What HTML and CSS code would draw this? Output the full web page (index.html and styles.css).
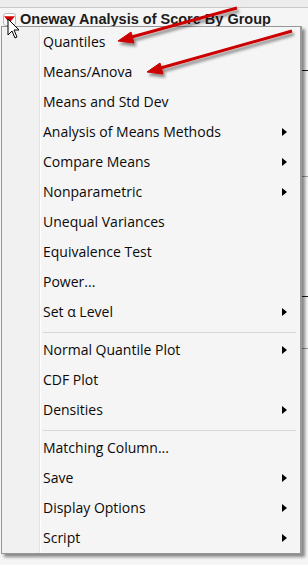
FILE: index.html
```html
<!DOCTYPE html>
<html lang="en">
<head>
    <meta charset="UTF-8">
    <title>Oneway Analysis menu</title>
    <link rel="stylesheet" href="styles.css">
</head>
<body>
    <div class="window">
        <div class="top-strip"></div>
        <div class="title-bar">
            <span class="disclosure">
                <svg width="12" height="8" viewBox="0 0 12 8"><polygon points="0,0 12,0 6,7" fill="#d40000"/></svg>
            </span>
            <span class="title">Oneway Analysis of Score By Group</span>
        </div>
        <!-- report content behind the menu -->
        <div class="report">
            <div class="rule dark" style="top: 42px"></div>
            <div class="rule" style="top: 148px"></div>
            <div class="rule dark" style="top: 268px"></div>
            <div class="rule" style="top: 320px"></div>
        </div>
    </div>

    <div class="menu">
        <div class="menu-item">Quantiles</div>
        <div class="menu-item">Means/Anova</div>
        <div class="menu-item">Means and Std Dev</div>
        <div class="menu-item sub">Analysis of Means Methods</div>
        <div class="menu-item sub">Compare Means</div>
        <div class="menu-item sub">Nonparametric</div>
        <div class="menu-item">Unequal Variances</div>
        <div class="menu-item">Equivalence Test</div>
        <div class="menu-item">Power...</div>
        <div class="menu-item sub">Set α Level</div>
        <div class="menu-sep"></div>
        <div class="menu-item sub">Normal Quantile Plot</div>
        <div class="menu-item">CDF Plot</div>
        <div class="menu-item sub">Densities</div>
        <div class="menu-sep"></div>
        <div class="menu-item">Matching Column...</div>
        <div class="menu-item sub">Save</div>
        <div class="menu-item sub">Display Options</div>
        <div class="menu-item sub">Script</div>
    </div>

    <!-- mouse pointer -->
    <svg class="cursor" width="14" height="22" viewBox="0 0 14 22">
        <path d="M1 1 L1 17 L5 13 L8 20 L10 19 L7 12 L12 12 Z" fill="#fff" stroke="#000" stroke-width="1" stroke-linejoin="miter"/>
    </svg>

    <!-- callout arrows -->
    <svg class="callouts" width="308" height="100" viewBox="0 0 308 100">
        <defs>
            <filter id="shadow" x="-20%" y="-50%" width="140%" height="200%">
                <feDropShadow dx="2" dy="3" stdDeviation="1.6" flood-color="#000" flood-opacity="0.45"/>
            </filter>
        </defs>
        <g filter="url(#shadow)" fill="#cc0000" stroke="#cc0000">
            <line x1="237" y1="8" x2="128" y2="38" stroke-width="3"/>
            <polygon points="118,41 131,32 134,43" stroke-width="1"/>
            <line x1="292" y1="31" x2="157" y2="69" stroke-width="3"/>
            <polygon points="147,72 160,63 163,74" stroke-width="1"/>
        </g>
    </svg>
</body>
</html>
```

FILE: styles.css
```css
body {
    margin: 0;
    width: 308px;
    height: 565px;
    background-color: #ffffff;
    font-family: "Open Sans", "Noto Sans", sans-serif;
    position: relative;
    overflow: hidden;
}
.window {
    height: 100%;
    background-color: #f5f5f5;
}
.top-strip {
    height: 7px;
    background-color: #ececec;
    border-bottom: 1px solid #c8c8c8;
}
.title-bar {
    display: flex;
    align-items: center;
    height: 20px;
    padding-left: 3px;
    gap: 4px;
}
.disclosure {
    display: flex;
    align-items: center;
    justify-content: center;
    width: 13px;
    height: 13px;
    background-color: #fff;
    border: 1px solid #b8b8b8;
    border-radius: 3px;
    box-sizing: border-box;
    margin-top: 3px;
}
.title {
    font-family: "Liberation Sans", Arial, sans-serif;
    font-weight: bold;
    font-size: 14.5px;
    color: #1c1c1c;
    margin-top: 2px;
}
.report {
    position: relative;
}
.rule {
    position: absolute;
    left: 300px;
    right: 0;
    height: 1px;
    background-color: #9a9a9a;
}
.rule.dark {
    background-color: #1a1a1a;
}

/* popup menu */
.menu {
    position: absolute;
    left: 1px;
    top: 26px;
    width: 298px;
    height: 526px;
    background-color: #f5f5f5;
    border: 1px solid #979797;
    border-right: 2px solid #9a9a9a;
    box-shadow: 3px 3px 3px rgba(0, 0, 0, 0.45);
    background-image: linear-gradient(to right, #f1f1f1 0, #f1f1f1 37px, #e2e3e3 37px, #e2e3e3 38px, #fff 38px, #fff 39px, transparent 39px);
}
.menu-item {
    height: 30px;
    line-height: 30px;
    padding-left: 41px;
    font-size: 14px;
    color: #0a0a0a;
    position: relative;
}
.menu-item.sub::after {
    content: "";
    position: absolute;
    left: 280px;
    top: 11px;
    border-left: 5px solid #000;
    border-top: 4px solid transparent;
    border-bottom: 4px solid transparent;
}
.menu-sep {
    height: 1px;
    margin: 5px 4px 2px 41px;
    background-color: #d7d7d7;
}

.cursor {
    position: absolute;
    left: 7px;
    top: 18px;
}
.callouts {
    position: absolute;
    left: 0;
    top: 0;
}
```
